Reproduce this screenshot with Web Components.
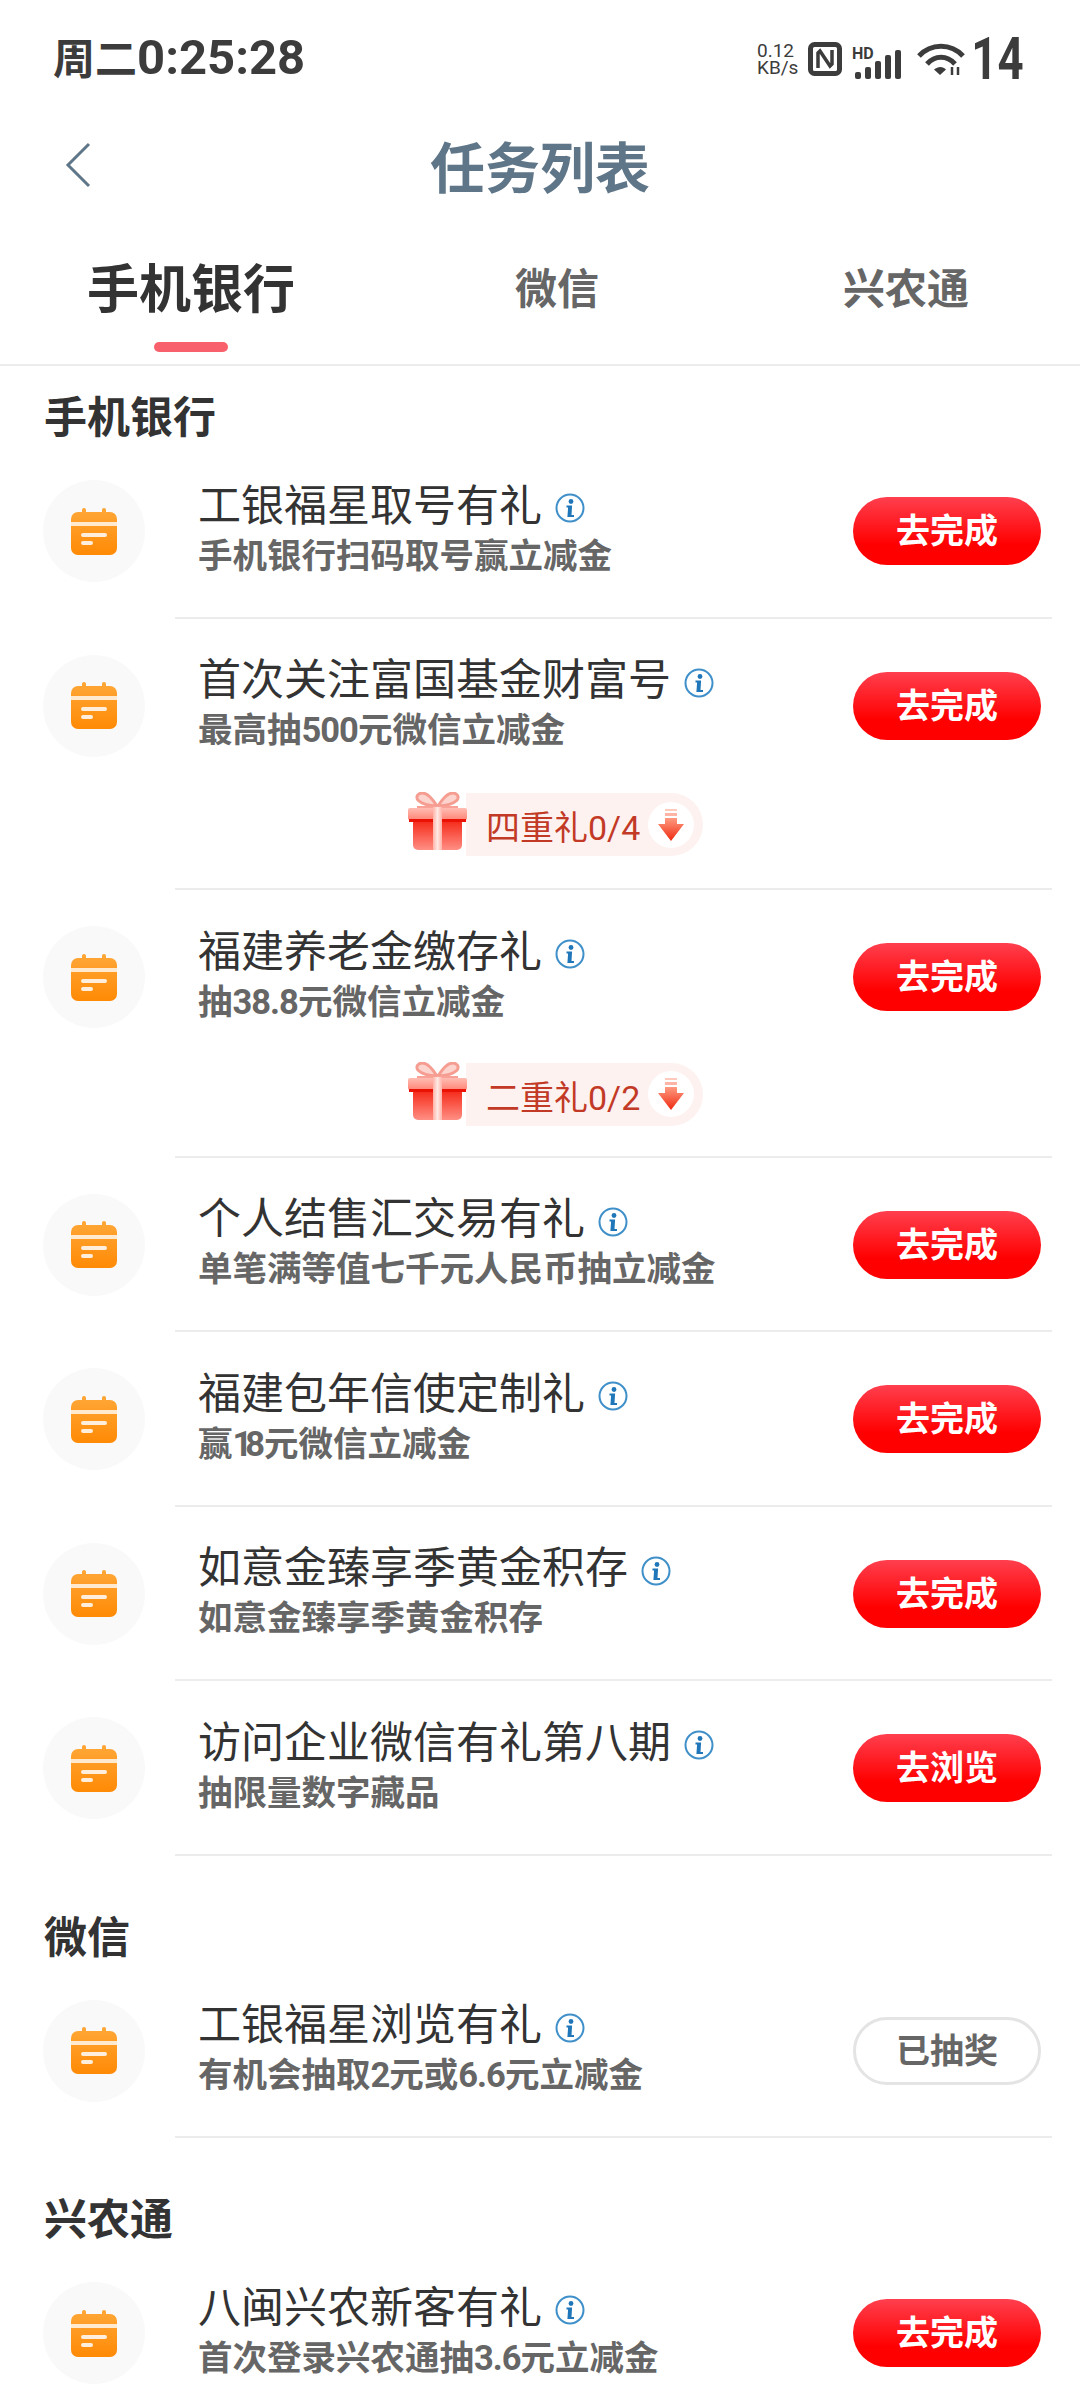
<!DOCTYPE html>
<html lang="zh">
<head>
<meta charset="utf-8">
<title>任务列表</title>
<style>
    html, body { margin: 0; padding: 0; background: #fff; }
    body {
        width: 1080px;
        height: 2400px;
        overflow: hidden;
        font-family: "Noto Sans CJK SC", "Noto Sans", sans-serif;
    }
</style>
</head>
<body>
<status-bar></status-bar>
<nav-header>任务列表</nav-header>
<tab-bar></tab-bar>

<section-title first>手机银行</section-title>
<task-row title="工银福星取号有礼" sub="手机银行扫码取号赢立减金"></task-row>
<task-row title="首次关注富国基金财富号" sub="最高抽500元微信立减金"><gift-pill style="--top: 2px; --gap: 32px">四重礼0/4</gift-pill></task-row>
<task-row title="福建养老金缴存礼" sub="抽38.8元微信立减金"><gift-pill style="--gap: 30px">二重礼0/2</gift-pill></task-row>
<task-row title="个人结售汇交易有礼" sub="单笔满等值七千元人民币抽立减金"></task-row>
<task-row title="福建包年信使定制礼" sub="赢18元微信立减金"></task-row>
<task-row title="如意金臻享季黄金积存" sub="如意金臻享季黄金积存"></task-row>
<task-row title="访问企业微信有礼第八期" sub="抽限量数字藏品" action="去浏览"></task-row>

<section-title>微信</section-title>
<task-row title="工银福星浏览有礼" sub="有机会抽取2元或6.6元立减金" action="已抽奖" done></task-row>

<section-title>兴农通</section-title>
<task-row title="八闽兴农新客有礼" sub="首次登录兴农通抽3.6元立减金"></task-row>

<script>
(function () {
    const CJK = '"Noto Sans CJK SC", "Noto Sans", sans-serif';

    class StatusBar extends HTMLElement {
        constructor() {
            super();
            this.attachShadow({mode: 'open'}).innerHTML = `
                <style>
                    :host {
                        display: flex;
                        justify-content: space-between;
                        align-items: center;
                        height: 118px;
                        padding: 0 59px 0 53px;
                        color: #3c3c3c;
                        font-family: Roboto, ${CJK};
                    }
                    .clock { font-size: 42px; font-weight: 700; line-height: 50px; white-space: nowrap; }
                    .clock b { font-size: 49px; font-weight: 700; }
                    .right { display: flex; align-items: center; }
                    .speed { font-size: 19px; line-height: 17px; width: 40px; margin-right: 11px; white-space: nowrap; }
                    .nfc { margin-right: 10px; }
                    .signal { margin-right: 13px; }
                    .wifi { margin-right: 8px; }
                    .batt {
                        width: 48px;
                        font-size: 60px;
                        font-weight: 700;
                        line-height: 60px;
                        display: flex;
                        justify-content: center;
                    }
                    .batt span { display: inline-block; transform: scaleX(.76); }
                    svg { display: block; }
                </style>
                <div class="clock">周二<b>0:25:28</b></div>
                <div class="right">
                    <div class="speed">0.12<br>KB/s</div>
                    <svg class="nfc" width="34" height="34" viewBox="0 0 34 34" fill="none" stroke="#3c3c3c">
                        <rect x="2.500" y="2.500" width="29" height="29" rx="4" stroke-width="5"/>
                        <path d="M10 26V11l2-2 10 15 2-2V8" stroke-width="3.500"/>
                    </svg>
                    <svg class="signal" width="52" height="40" viewBox="-2 -8 52 40" fill="#3c3c3c">
                        <text x="-2" y="12" font-family="Roboto" font-size="16" font-weight="700">HD</text>
                        <rect x="1" y="25" width="6" height="7" rx="2"/>
                        <rect x="11" y="20" width="6" height="12" rx="2"/>
                        <rect x="21" y="14" width="6" height="18" rx="2"/>
                        <rect x="31" y="8" width="6" height="24" rx="2"/>
                        <rect x="41" y="3" width="6" height="29" rx="2"/>
                    </svg>
                    <svg class="wifi" width="48" height="32" viewBox="0 0 48 32" fill="none" stroke="#3c3c3c" stroke-width="5">
                        <path d="M2 13C14 -0 34 -0 46 13"/>
                        <path d="M10 21C18 12 30 12 38 21"/>
                        <path d="M17 26.500C21 23 26 23 29 26.500L23 32z" fill="#3c3c3c" stroke="none"/>
                        <path d="M35 24v8M41 24v8" stroke-width="2.500"/>
                    </svg>
                    <div class="batt"><span>14</span></div>
                </div>
            `;
        }
    }

    class NavHeader extends HTMLElement {
        constructor() {
            super();
            this.attachShadow({mode: 'open'}).innerHTML = `
                <style>
                    :host {
                        display: grid;
                        grid-template-columns: 1fr auto 1fr;
                        align-items: center;
                        height: 100px;
                        color: #5f7688;
                    }
                    .back { margin: -6px 0 0 65px; display: block; }
                    .title { font-size: 55px; font-weight: 700; line-height: 100px; margin-top: -8px; }
                </style>
                <svg class="back" width="26" height="46" viewBox="0 0 26 46" fill="none" stroke="#5f7688" stroke-width="3">
                    <path d="M24 2L3 23l21 21"/>
                </svg>
                <div class="title"><slot></slot></div>
                <div></div>
            `;
        }
    }

    class TabBar extends HTMLElement {
        constructor() {
            super();
            this.attachShadow({mode: 'open'}).innerHTML = `
                <style>
                    :host {
                        display: grid;
                        grid-template-columns: 382px 350px 348px;
                        height: 146px;
                        border-bottom: 2px solid #ececec;
                    }
                    .tab {
                        display: flex;
                        flex-direction: column;
                        align-items: center;
                        padding-top: 36px;
                        font-size: 42px;
                        font-weight: 700;
                        line-height: 64px;
                        color: #666;
                    }
                    .on { font-size: 52px; color: #333; }
                    .on i {
                        width: 74px;
                        height: 10px;
                        margin-top: 24px;
                        border-radius: 5px;
                        background: #f8606c;
                    }
                </style>
                <div class="tab on">手机银行<i></i></div>
                <div class="tab">微信</div>
                <div class="tab">兴农通</div>
            `;
        }
    }

    class SectionTitle extends HTMLElement {
        constructor() {
            super();
            this.attachShadow({mode: 'open'}).innerHTML = `
                <style>
                    :host {
                        display: block;
                        padding: 51px 0 3px 44px;
                        height: 54px;
                        font-size: 43px;
                        font-weight: 700;
                        line-height: 54px;
                        color: #333;
                    }
                    :host([first]) { padding-top: 21px; }
                </style>
                <slot></slot>
            `;
        }
    }

    class CalendarIcon extends HTMLElement {
        constructor() {
            super();
            this.attachShadow({mode: 'open'}).innerHTML = `
                <style>
                    :host {
                        display: flex;
                        align-items: center;
                        justify-content: center;
                        width: 102px;
                        height: 102px;
                        border-radius: 50%;
                        background: #f9f9f9;
                    }
                    svg { display: block; }
                </style>
                <svg width="46" height="47" viewBox="0 0 46 47">
                    <defs>
                        <linearGradient id="cal" x1="0" y1="0" x2="0" y2="1">
                            <stop offset="0" stop-color="#ffa534"/>
                            <stop offset="1" stop-color="#ff8a05"/>
                        </linearGradient>
                    </defs>
                    <rect x="11" y="0" width="4" height="8" rx="2" fill="#ffa534"/>
                    <rect x="31" y="0" width="4" height="8" rx="2" fill="#ffa534"/>
                    <rect x="0" y="4" width="46" height="43" rx="7" fill="url(#cal)"/>
                    <rect x="0" y="14" width="46" height="4" fill="#ffe9cf"/>
                    <rect x="10" y="25" width="26" height="4" rx="2" fill="#ffeedb"/>
                    <rect x="10" y="33" width="12" height="4" rx="2" fill="#ffeedb"/>
                </svg>
            `;
        }
    }

    class InfoIcon extends HTMLElement {
        constructor() {
            super();
            this.attachShadow({mode: 'open'}).innerHTML = `
                <style>
                    :host { display: block; width: 30px; height: 30px; flex: none; margin-top: 12px; }
                    svg { display: block; }
                </style>
                <svg width="30" height="30" viewBox="0 0 30 30">
                    <circle cx="15" cy="15" r="13.500" fill="#fff" stroke="#3f8fc9" stroke-width="2"/>
                    <circle cx="16" cy="8.500" r="2.400" fill="#1f76b8"/>
                    <path d="M11.500 12.500h5.600l-.6 9.500h2.500v2h-6.600l.7-9.500h-1.600z" fill="#1f76b8"/>
                </svg>
            `;
        }
    }

    class ActionButton extends HTMLElement {
        constructor() {
            super();
            this.attachShadow({mode: 'open'}).innerHTML = `
                <style>
                    :host {
                        display: flex;
                        align-items: center;
                        justify-content: center;
                        box-sizing: border-box;
                        width: 188px;
                        height: 68px;
                        padding-bottom: 5px;
                        flex: none;
                        border-radius: 34px;
                        background: linear-gradient(#ff3f4e, #ff0000 70%);
                        color: #fff;
                        font-size: 34px;
                        font-weight: 700;
                    }
                    :host([done]) {
                        background: #fff;
                        border: 3px solid #e4e4e4;
                        color: #666;
                    }
                </style>
                <slot></slot>
            `;
        }
    }

    class GiftPill extends HTMLElement {
        constructor() {
            super();
            this.attachShadow({mode: 'open'}).innerHTML = `
                <style>
                    :host {
                        display: flex;
                        align-items: center;
                        width: 295px;
                        height: 63px;
                        margin: var(--top, 0) 0 var(--gap, 32px) 233px;
                    }
                    .gift { display: block; flex: none; margin-bottom: 7px; position: relative; z-index: 1; }
                    .pill {
                        display: flex;
                        align-items: center;
                        flex: 1;
                        height: 63px;
                        padding-left: 20px;
                        box-sizing: border-box;
                        margin-left: -1px;
                        border-radius: 0 32px 32px 0;
                        background: #fdf2f0;
                        color: #c23a26;
                        font-size: 34px;
                        white-space: nowrap;
                    }
                    .txt { width: 162px; font-family: Roboto, ${CJK}; padding-top: 2px; }
                    .dot {
                        display: flex;
                        align-items: center;
                        justify-content: center;
                        width: 46px;
                        height: 46px;
                        border-radius: 50%;
                        background: #fff;
                    }
                </style>
                <svg class="gift" width="59" height="58" viewBox="0 0 59 58">
                    <defs>
                        <linearGradient id="box" x1="0" y1="0" x2="0" y2="1">
                            <stop offset="0" stop-color="#f4200f"/>
                            <stop offset="1" stop-color="#ff8f84"/>
                        </linearGradient>
                        <linearGradient id="lid" x1="0" y1="0" x2="0" y2="1">
                            <stop offset="0" stop-color="#ffbdb3"/>
                            <stop offset="1" stop-color="#ff8577"/>
                        </linearGradient>
                        <linearGradient id="rib" x1="0" y1="0" x2="1" y2="0">
                            <stop offset="0" stop-color="#ffb3a8"/>
                            <stop offset=".5" stop-color="#ffe9e4"/>
                            <stop offset="1" stop-color="#ffb3a8"/>
                        </linearGradient>
                    </defs>
                    <path d="M29 14C22 3 16 -1 11 2S9 13 29 14zM30 14C37 3 43 -1 48 2S50 13 30 14z" fill="#fdd4cd" stroke="#f69d92" stroke-width="3"/>
                    <path d="M9 15h41" stroke="#f9a197" stroke-width="2"/>
                    <rect x="5" y="26" width="49" height="32" rx="5" fill="url(#box)"/>
                    <rect x="0" y="16" width="59" height="12" rx="2" fill="url(#lid)"/>
                    <rect x="1" y="27" width="57" height="3" fill="#ea1205"/>
                    <rect x="25" y="15" width="9" height="43" fill="url(#rib)"/>
                </svg>
                <div class="pill">
                    <div class="txt"><slot></slot></div>
                    <div class="dot">
                        <svg width="26" height="32" viewBox="0 0 26 32">
                            <defs>
                                <linearGradient id="arr" x1="0" y1="0" x2="0" y2="1">
                                    <stop offset="0" stop-color="#ff9a80"/>
                                    <stop offset="1" stop-color="#ee2a10"/>
                                </linearGradient>
                            </defs>
                            <rect x="7" y="0" width="12" height="2" fill="#ffc9bc"/>
                            <rect x="7" y="4" width="12" height="3" fill="#ffb5a5"/>
                            <path d="M7 9h12v6h7L13 32 0 15h7z" fill="url(#arr)"/>
                        </svg>
                    </div>
                </div>
            `;
        }
    }

    class TaskRow extends HTMLElement {
        constructor() {
            super();
            this.attachShadow({mode: 'open'}).innerHTML = `
                <style>
                    :host { display: flex; padding-left: 43px; width: 1009px; }
                    .ico { display: flex; align-items: center; height: 174.500px; width: 132px; flex: none; }
                    .main { flex: 1; min-width: 0; border-bottom: 2px solid #ececec; box-sizing: border-box; }
                    .top {
                        display: flex;
                        align-items: center;
                        justify-content: space-between;
                        height: 174.500px;
                        margin-bottom: -2px;
                        padding: 0 11px 0 23px;
                    }
                    .text { padding-bottom: 4px; }
                    .name {
                        display: flex;
                        align-items: center;
                        gap: 13px;
                        font-size: 43px;
                        line-height: 55px;
                        color: #333;
                        white-space: nowrap;
                    }
                    .sub {
                        font-family: Roboto, ${CJK};
                        font-size: 34.500px;
                        font-weight: 700;
                        line-height: 55px;
                        margin-top: -1px;
                        color: #666;
                        white-space: nowrap;
                    }
                    .one { letter-spacing: -7px; }
                    .num { letter-spacing: -1px; }
                </style>
                <div class="ico"><calendar-icon></calendar-icon></div>
                <div class="main">
                    <div class="top">
                        <div class="text">
                            <div class="name"><span id="t"></span><info-icon></info-icon></div>
                            <div class="sub" id="s"></div>
                        </div>
                        <action-button id="b"></action-button>
                    </div>
                    <slot></slot>
                </div>
            `;
        }

        connectedCallback() {
            const root = this.shadowRoot;
            root.querySelector('#t').textContent = this.getAttribute('title');
            // the reference font has a narrow 1, and tighter digits than Roboto
            root.querySelector('#s').innerHTML = this.getAttribute('sub')
                .replace(/[\d.]+/g, '<span class="num">$&</span>')
                .replace(/1/g, '<span class="one">1</span>');
            const btn = root.querySelector('#b');
            btn.textContent = this.getAttribute('action') || '去完成';
            if (this.hasAttribute('done')) btn.setAttribute('done', '');
            this.removeAttribute('title');
        }
    }

    customElements.define('status-bar', StatusBar);
    customElements.define('nav-header', NavHeader);
    customElements.define('tab-bar', TabBar);
    customElements.define('section-title', SectionTitle);
    customElements.define('calendar-icon', CalendarIcon);
    customElements.define('info-icon', InfoIcon);
    customElements.define('action-button', ActionButton);
    customElements.define('gift-pill', GiftPill);
    customElements.define('task-row', TaskRow);
})();
</script>
</body>
</html>
